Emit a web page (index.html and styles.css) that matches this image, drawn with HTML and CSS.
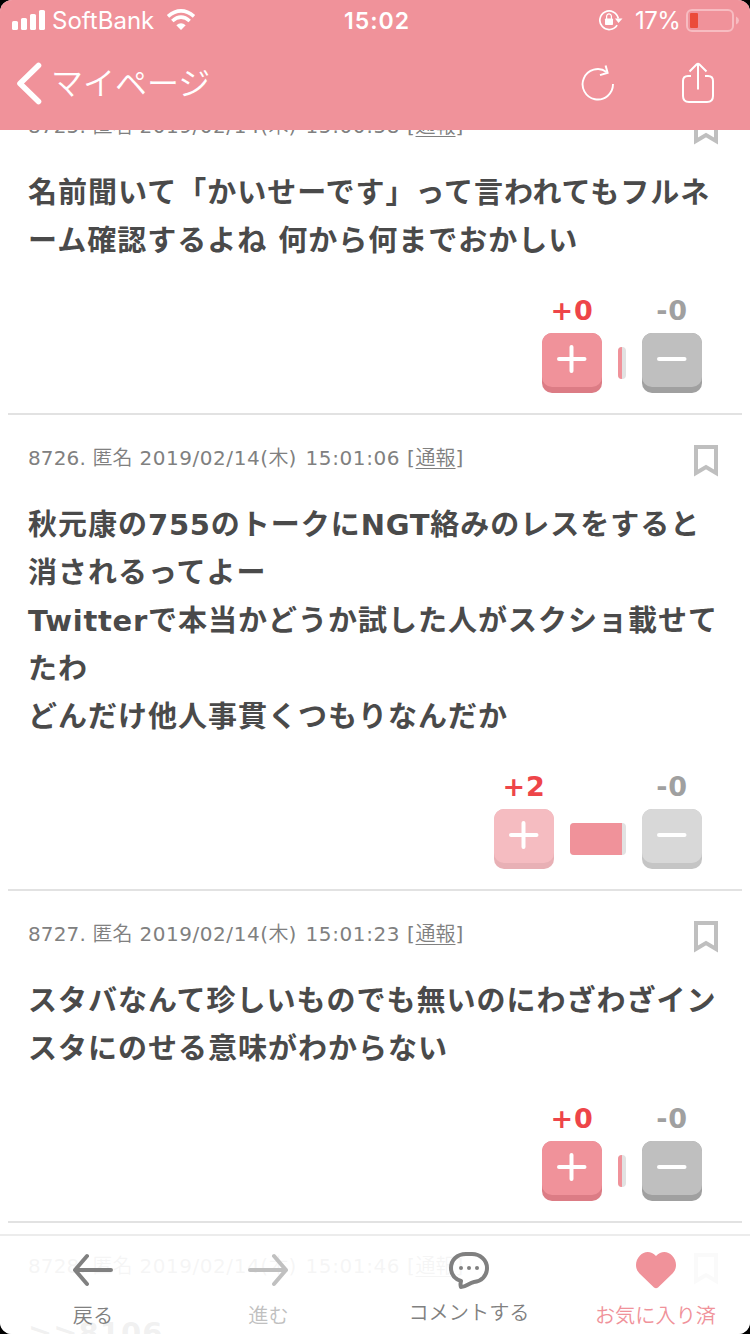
FILE: index.html
```html
<!DOCTYPE html>
<html lang="ja">
<head>
<meta charset="utf-8">
<title>マイページ</title>
<link rel="stylesheet" href="styles.css">
</head>
<body>
<div class="screen">
  <header class="header">
    <div class="status">
      <svg class="signal" width="34" height="20" viewBox="0 0 34 20" fill="#fff"><rect x="0" y="11" width="6" height="9" rx="1.6"/><rect x="9" y="8" width="6" height="12" rx="1.6"/><rect x="18" y="4" width="6" height="16" rx="1.6"/><rect x="27" y="0" width="6" height="20" rx="1.6"/></svg>
      <span class="carrier">SoftBank</span>
      <svg class="wifi" width="30" height="22" viewBox="0 0 30 22"><g fill="none" stroke="#fff" stroke-width="3.6"><path d="M2 7.4Q15-3.600 28 7.400"/><path d="M6.300 12Q15 4.400 23.700 12"/></g><path d="M15 21L10.300 16.200Q15 12.400 19.700 16.200Z" fill="#fff"/></svg>
      <span class="clock">15:02</span>
      <svg class="lock" width="24" height="22" viewBox="0 0 24 22"><path d="M18.100 16.100A9.300 9.300 0 1 1 19.300 9.500" fill="none" stroke="#fff" stroke-width="1.700"/><path d="M16 9.500H23.500L19.500 14Z" fill="#fff"/><rect x="6" y="9.400" width="8" height="6.600" rx=".8" fill="#fff"/><path d="M7.600 10V7.500a2.400 2.700 0 0 1 4.800 0V10" fill="none" stroke="#fff" stroke-width="1.200"/></svg>
      <span class="percent">17%</span>
      <svg class="battery" width="54" height="24" viewBox="0 0 54 24"><rect x="1" y="1" width="46" height="21" rx="5" fill="none" stroke="#f7bcc1" stroke-width="2"/><rect x="4" y="4" width="8" height="15" rx="1" fill="#eb4b3a"/><path d="M50 7.500Q53 9 53 11.500T50 15.500Z" fill="#f7bcc1"/></svg>
    </div>
    <div class="nav">
      <svg class="chevron" width="26" height="43" viewBox="0 0 26 43"><path d="M21.500 3.500L3 21.500L21.500 39.500" fill="none" stroke="#fff" stroke-width="5.600" stroke-linecap="round" stroke-linejoin="round"/></svg>
      <span class="nav-title">マイページ</span>
      <svg class="reload" width="34" height="36" viewBox="0 0 34 36"><path d="M32 19A15.200 15.200 0 1 1 25.600 6.900" fill="none" stroke="#fff" stroke-width="1.900"/><path d="M24.600.5L26.600 7.800L19 10.100" fill="none" stroke="#fff" stroke-width="2"/></svg>
      <svg class="share" width="34" height="42" viewBox="0 0 34 42"><path d="M10 14H7Q2 14 2 19V34Q2 40 8 40H26Q32 40 32 34V19Q32 14 27 14H24M17 27.500V2M8.500 9.500L15.500 2.500Q17 1 18.500 2.500L25.500 9.500" fill="none" stroke="#fff" stroke-width="2"/></svg>
    </div>
  </header>

  <main class="posts">
    <article class="post">
      <div class="meta"><span><span class="num">8725. </span><span class="jp">匿名</span><span class="date"> 2019/02/14(</span><span class="jp">木</span><span class="gap">) </span><span class="time">15:00:58 [</span><a class="jp">通報</a>]</span><svg class="mark" width="24" height="32" viewBox="0 0 24 32"><path d="M2 2H22V28L12 22L2 28Z"/></svg></div>
      <p class="body"><span class="line">名前聞いて「かいせーです」って言われてもフルネ</span><span class="line">ーム確認するよね 何から何までおかしい</span></p>
      <div class="votes">
        <div class="vote"><b class="plus">+0</b><div class="btn pink"><svg width="60" height="54"><path d="M17 26H42.500M29.500 14V38"/></svg></div></div>
        <div class="bar small"><i class="fill half"></i></div>
        <div class="vote"><b class="minus">-0</b><div class="btn gray"><svg width="60" height="54"><path d="M17 26H42.500"/></svg></div></div>
      </div>
    </article>
    <article class="post">
      <div class="meta"><span><span class="num">8726. </span><span class="jp">匿名</span><span class="date"> 2019/02/14(</span><span class="jp">木</span><span class="gap">) </span><span class="time">15:01:06 [</span><a class="jp">通報</a>]</span><svg class="mark" width="24" height="32" viewBox="0 0 24 32"><path d="M2 2H22V28L12 22L2 28Z"/></svg></div>
      <p class="body"><span class="line">秋元康の<span class="lat">755</span>のトークに<span class="lat">NGT</span>絡みのレスをすると</span><span class="line">消されるってよー</span><span class="line"><span class="lat">Twitter</span>で本当かどうか試した人がスクショ載せて</span><span class="line">たわ</span><span class="line">どんだけ他人事貫くつもりなんだか</span></p>
      <div class="votes">
        <div class="vote"><b class="plus">+2</b><div class="btn pink faded"><svg width="60" height="54"><path d="M17 26H42.500M29.500 14V38"/></svg></div></div>
        <div class="bar wide"><i class="fill most"></i></div>
        <div class="vote"><b class="minus">-0</b><div class="btn gray faded"><svg width="60" height="54"><path d="M17 26H42.500"/></svg></div></div>
      </div>
    </article>
    <article class="post">
      <div class="meta"><span><span class="num">8727. </span><span class="jp">匿名</span><span class="date"> 2019/02/14(</span><span class="jp">木</span><span class="gap">) </span><span class="time">15:01:23 [</span><a class="jp">通報</a>]</span><svg class="mark" width="24" height="32" viewBox="0 0 24 32"><path d="M2 2H22V28L12 22L2 28Z"/></svg></div>
      <p class="body"><span class="line">スタバなんて珍しいものでも無いのにわざわざイン</span><span class="line">スタにのせる意味がわからない</span></p>
      <div class="votes">
        <div class="vote"><b class="plus">+0</b><div class="btn pink"><svg width="60" height="54"><path d="M17 26H42.500M29.500 14V38"/></svg></div></div>
        <div class="bar small"><i class="fill half"></i></div>
        <div class="vote"><b class="minus">-0</b><div class="btn gray"><svg width="60" height="54"><path d="M17 26H42.500"/></svg></div></div>
      </div>
    </article>
    <article class="post">
      <div class="meta"><span><span class="num">8728. </span><span class="jp">匿名</span><span class="date"> 2019/02/14(</span><span class="jp">木</span><span class="gap">) </span><span class="time">15:01:46 [</span><a class="jp">通報</a>]</span><svg class="mark" width="24" height="32" viewBox="0 0 24 32"><path d="M2 2H22V28L12 22L2 28Z"/></svg></div>
      <p class="body"><span class="line quote">&gt;&gt;8106</span></p>
    </article>
  </main>

  <footer class="toolbar">
    <div class="tool back">
      <svg width="42" height="34" viewBox="0 0 42 34"><path d="M39 17H3M15 3L3 17L15 31"/></svg>
      <span>戻る</span>
    </div>
    <div class="tool forward">
      <svg width="42" height="34" viewBox="0 0 42 34"><path d="M2 17H38M26 3L38 17L26 31"/></svg>
      <span>進む</span>
    </div>
    <div class="tool comment">
      <svg width="42" height="38" viewBox="0 0 42 38"><path d="M18 3H24C32 3 39 9 39 17C39 25 33 30.500 26 31C21 32 18 36 13 36Q12 34 13 30C7 28 3 24 3 17C3 9 9 3 18 3Z"/><g class="dots"><circle cx="13" cy="17" r="2"/><circle cx="21" cy="17" r="2"/><circle cx="29" cy="17" r="2"/></g></svg>
      <span>コメントする</span>
    </div>
    <div class="tool favorite">
      <svg width="40" height="37" viewBox="0 0 40 37"><path d="M20 4C25-1.500 32-.7 36 3.500C41.500 9 41 17 36.500 21.500L22 35.500Q20 37 18 35.500L3.500 21.500C-1 17-1.500 9 4 3.500C8-.7 15-1.500 20 4Z"/></svg>
      <span>お気に入り済</span>
    </div>
  </footer>
</div>
</body>
</html>
```

FILE: styles.css
```css
* { box-sizing: border-box; }
body { margin: 0; background: #000; }
.screen {
  position: relative;
  width: 750px;
  height: 1334px;
  overflow: hidden;
  border-radius: 12px;
  background: #fff;
  font-family: "DejaVu Sans", "Noto Sans CJK JP", sans-serif;
}
svg { display: block; flex: none; }

.header {
  position: absolute;
  top: 0;
  left: 0;
  z-index: 2;
  width: 750px;
  height: 130px;
  background: #f0929a;
  color: #fff;
}
.status {
  display: flex;
  align-items: center;
  height: 40px;
  padding-left: 12px;
  font: 24px/40px Inter, sans-serif;
  white-space: nowrap;
}
.status span { padding-top: 2px; }
.carrier { width: 103px; margin-left: 6px; }
.wifi { margin-left: 11px; }
.clock { width: 66px; margin-left: 148px; font-weight: 600; font-size: 23px; letter-spacing: 1px; }
.lock { margin-left: 189px; }
.percent { width: 46px; margin-left: 12px; letter-spacing: -0.6px; }
.battery { margin: 1px 0 0 5px; }
.nav { display: flex; align-items: center; height: 86px; padding-left: 17px; }
.nav-title {
  width: 162px;
  margin: 0 0 4px 8px;
  font: 350 32px/48px "Noto Sans CJK JP DemiLight", "Noto Sans CJK JP", sans-serif;
}
.reload { margin-left: 368px; }
.share { margin-left: 66px; }

.posts { display: flex; flex-direction: column; padding: 83px 8px 0; }
.post { border-bottom: 2px solid #e2e2e2; padding-bottom: 20px; }
.meta {
  display: flex;
  justify-content: space-between;
  height: 86px;
  padding: 29px 24px 0 20px;
  color: #808080;
  font-size: 20px;
  line-height: 26px;
  white-space: pre;
}
.jp { font-family: "Noto Sans CJK JP DemiLight", "Noto Sans CJK JP", sans-serif; font-weight: 350; }
.num { letter-spacing: .15px; }
.date { letter-spacing: .55px; }
.gap { letter-spacing: 1.4px; }
.time { letter-spacing: .6px; }
.meta a { text-decoration: underline; text-underline-offset: 3px; text-decoration-thickness: 1px; }
.mark { margin-top: 1px; fill: none; stroke: #bfbfbf; stroke-width: 4; }
.body {
  margin: 0;
  padding-left: 20px;
  color: #4a4a4a;
  font-size: 29px;
  font-weight: 700;
  line-height: 48px;
  letter-spacing: 1px;
  white-space: nowrap;
}
.lat { letter-spacing: .7px; }
.line { display: block; height: 48px; }
.votes {
  display: flex;
  justify-content: flex-end;
  align-items: flex-end;
  height: 128px;
  padding-right: 40px;
}
.vote { display: flex; flex-direction: column; align-items: center; width: 60px; }
.vote b { height: 44px; font-size: 27px; line-height: 44px; letter-spacing: .7px; white-space: nowrap; }
.plus { color: #ee4549; }
.minus { color: #a0a0a0; }
.btn { width: 60px; height: 60px; border-radius: 10px; }
.btn svg { border-radius: 10px; fill: none; stroke: #fff; stroke-width: 4; stroke-linecap: round; }
.pink { background: #dc7c85; }
.pink svg { background: #f0929a; }
.gray { background: #a0a0a0; }
.gray svg { background: #bfbfbf; }
.pink.faded { background: #e8b0b5; }
.pink.faded svg { background: #f5bcc1; }
.gray.faded { background: #c5c5c5; }
.gray.faded svg { background: #d8d8d8; }
.bar { height: 32px; margin: 0 16px 14px; border-radius: 4px; overflow: hidden; background: #e2e2e2; }
.small { width: 8px; }
.wide { width: 56px; }
.fill { display: block; height: 100%; background: #f0929a; }
.half { width: 4px; }
.most { width: 52px; }

.toolbar {
  position: absolute;
  left: 0;
  bottom: 0;
  z-index: 2;
  display: grid;
  grid-template-columns: 186px 165px 236px 163px;
  width: 750px;
  height: 100px;
  border-top: 2px solid #ececec;
  background: rgba(255, 255, 255, .92);
}
.tool {
  display: flex;
  flex-direction: column;
  align-items: center;
  color: #808080;
  font: 350 20.200px/26px "Noto Sans CJK JP DemiLight", "Noto Sans CJK JP", sans-serif;
  white-space: nowrap;
}
.tool svg { fill: none; stroke: currentColor; stroke-width: 4; stroke-linecap: round; stroke-linejoin: round; }
.back svg, .forward svg { margin: 17px 0 15px; }
.forward { color: #c0c0c0; }
.comment svg { margin: 15px 0 10px; }
.tool .dots { fill: currentColor; stroke: none; }
.favorite { padding-right: 26px; color: #f0929a; }
.favorite svg { margin: 16px 0 13px; fill: currentColor; stroke: none; }
```
